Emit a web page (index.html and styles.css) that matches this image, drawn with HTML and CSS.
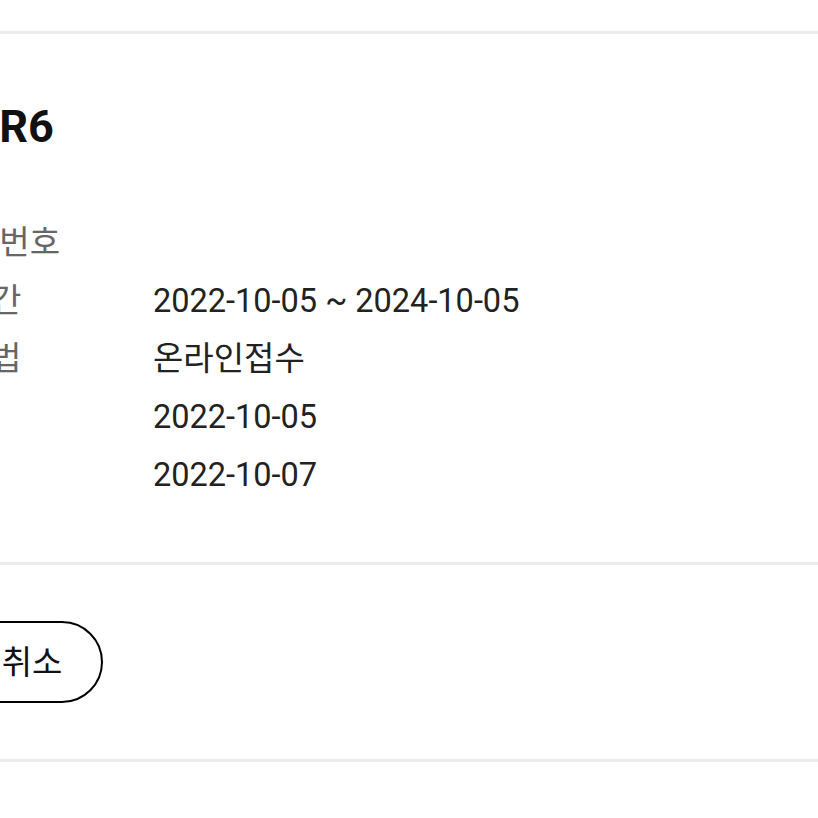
FILE: index.html
```html
<!DOCTYPE html>
<html lang="ko">
<head>
<meta charset="utf-8">
<title>신청 상세</title>
<link rel="stylesheet" href="styles.css">
</head>
<body>
<div class="page">
  <div class="prev-section"></div>
  <div class="divider"></div>
  <section class="detail">
    <h1 class="title">EOS R6</h1>
    <dl class="info">
      <dt class="label">자격증 번호</dt><dd class="value"></dd>
      <dt class="label">신청기간</dt><dd class="value">2022-10-05 ~ 2024-10-05</dd>
      <dt class="label">접수방법</dt><dd class="value value-ko">온라인접수</dd>
      <dt class="label">접수일</dt><dd class="value">2022-10-05</dd>
      <dt class="label">발급일</dt><dd class="value">2022-10-07</dd>
    </dl>
  </section>
  <div class="divider"></div>
  <section class="actions">
    <button class="btn-cancel" type="button">신청취소</button>
  </section>
  <div class="divider"></div>
</div>
</body>
</html>
```

FILE: styles.css
```css
html, body {
  margin: 0;
  padding: 0;
  background: #ffffff;
}
body {
  width: 818px;
  height: 818px;
  overflow: hidden;
  font-family: Roboto, "Noto Sans CJK KR", sans-serif;
  color: #222222;
}
.page {
  margin-left: -100px;
}
.prev-section {
  height: 31px;
}
.divider {
  height: 3px;
  background: #ececec;
}
.detail {
  padding: 63px 0 58px 0;
}
.title {
  margin: 0 0 57px 0;
  padding-left: 4px;
  font-size: 45px;
  line-height: 60px;
  font-weight: 700;
  color: #111111;
}
.info {
  margin: 0;
  display: grid;
  grid-template-columns: 253px 1fr;
  grid-auto-rows: 58px;
  font-size: 32.5px;
  line-height: 58px;
}
.label {
  margin: 0;
  font-size: 33px;
  color: #666666;
  white-space: nowrap;
}
.value {
  margin: 0;
  color: #222222;
  white-space: nowrap;
}
.value-ko {
  font-size: 33px;
}
.actions {
  padding: 56px 0;
}
.btn-cancel {
  display: block;
  height: 82px;
  padding: 0 39px;
  border: 2px solid #000000;
  border-radius: 41px;
  background: #ffffff;
  color: #111111;
  font-family: Roboto, "Noto Sans CJK KR", sans-serif;
  font-size: 33px;
  line-height: 1;
}
```
